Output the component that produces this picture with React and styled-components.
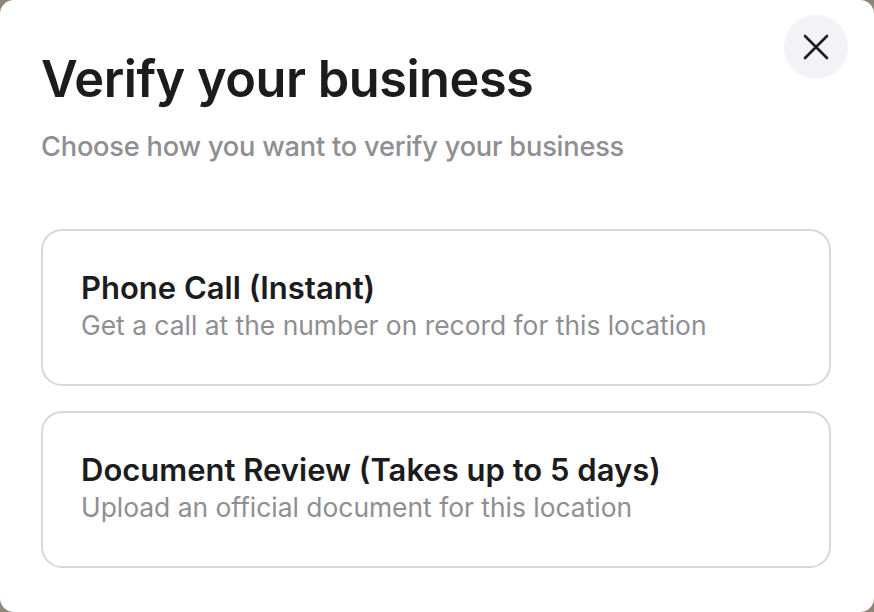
import React from "react";
import styled, { createGlobalStyle } from "styled-components";

const Global = createGlobalStyle`
  html, body { margin: 0; padding: 0; }
  body {
    width: 874px;
    height: 612px;
    overflow: hidden;
    background: #8f8578;
    font-family: Inter, "Noto Sans", sans-serif;
    -webkit-font-smoothing: antialiased;
  }
`;

const Dialog = styled.div`
  box-sizing: border-box;
  width: 874px;
  height: 612px;
  background: #ffffff;
  border-radius: 14px;
  padding: 49px 43px 0 41px;
  position: relative;
  display: flex;
  flex-direction: column;
`;

const Title = styled.h1`
  margin: 0;
  font-size: 50.5px;
  line-height: 60px;
  font-weight: 600;
  color: #1c1c1e;
  letter-spacing: -0.5px;
`;

const Subtitle = styled.p`
  margin: 21px 0 0;
  font-size: 27.2px;
  line-height: 34px;
  font-weight: 500;
  color: #8e8e93;
  letter-spacing: -0.2px;
`;

const Options = styled.div`
  margin-top: 65px;
  display: flex;
  flex-direction: column;
  gap: 25px;
`;

const Card = styled.button`
  box-sizing: border-box;
  height: 157px;
  width: 790px;
  border: 2px solid #d8d8dc;
  border-radius: 21px;
  background: #ffffff;
  padding: 0 38px 4px;
  display: flex;
  flex-direction: column;
  justify-content: center;
  align-items: flex-start;
  text-align: left;
  font-family: inherit;
  cursor: pointer;
`;

const CardTitle = styled.span`
  font-size: 31px;
  line-height: 38px;
  font-weight: 600;
  color: #1c1c1e;
`;

const CardText = styled.span`
  margin-top: 1px;
  font-size: 26.4px;
  line-height: 34px;
  font-weight: 400;
  color: #8e8e93;
`;

const Close = styled.button`
  position: absolute;
  top: 15px;
  right: 26px;
  width: 64px;
  height: 64px;
  border-radius: 50%;
  border: none;
  background: #f2f2f7;
  display: flex;
  align-items: center;
  justify-content: center;
  padding: 0;
  cursor: pointer;
`;

const options = [
  { title: "Phone Call (Instant)", text: "Get a call at the number on record for this location" },
  { title: "Document Review (Takes up to 5 days)", text: "Upload an official document for this location" },
];

export default function App() {
  return (
    <>
      <Global />
      <Dialog>
        <Close aria-label="Close">
          <svg width="26" height="26" viewBox="0 0 26 26" fill="none">
            <path d="M2 2L24 24M24 2L2 24" stroke="#1c1c1e" strokeWidth="2.6" strokeLinecap="round" />
          </svg>
        </Close>
        <Title>Verify your business</Title>
        <Subtitle>Choose how you want to verify your business</Subtitle>
        <Options>
          {options.map((o) => (
            <Card key={o.title}>
              <CardTitle>{o.title}</CardTitle>
              <CardText>{o.text}</CardText>
            </Card>
          ))}
        </Options>
      </Dialog>
    </>
  );
}
